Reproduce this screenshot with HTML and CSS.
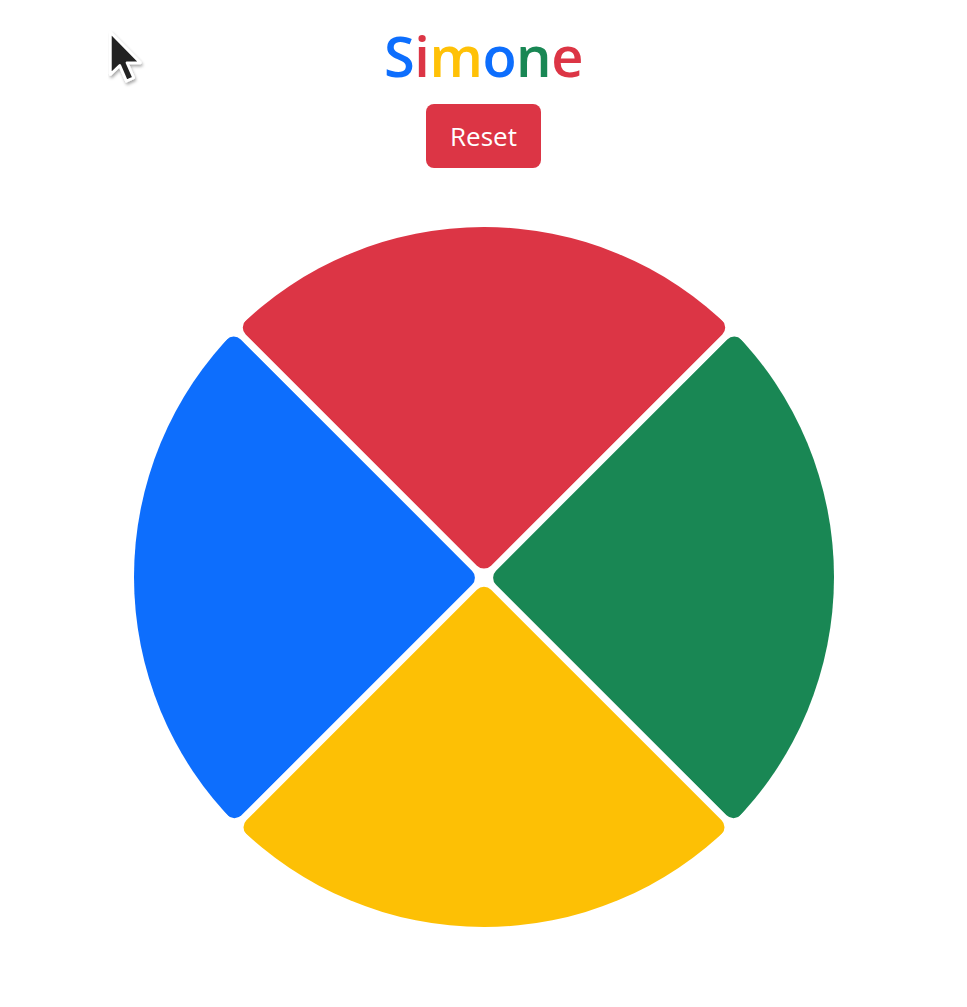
FILE: index.html
```html
<!DOCTYPE html>
<html lang="en">

<head>
    <meta charset="UTF-8">
    <meta name="viewport" content="width=device-width, initial-scale=1.0">
    <title>Simone</title>
    <link rel="stylesheet" href="styles.css">
</head>

<body>
    <div id="game">
        <h1 class="title">
            <span class="blue">S</span><span class="red">i</span><span class="yellow">m</span><span class="blue">o</span><span class="green">n</span><span class="red">e</span>
        </h1>
        <button type="button" class="reset-button">Reset</button>
        <div class="board">
            <div class="pads">
                <div class="pad pad-red"></div>
                <div class="pad pad-green"></div>
                <div class="pad pad-blue"></div>
                <div class="pad pad-yellow"></div>
            </div>
        </div>
    </div>
    <svg class="cursor" width="38" height="60" viewBox="0 0 34 54">
        <defs>
            <filter id="shadow" x="-30%" y="-30%" width="160%" height="160%">
                <feDropShadow dx="1" dy="2" stdDeviation="1.5" flood-color="#000" flood-opacity="0.35"/>
            </filter>
        </defs>
        <path d="M2 2 L2 40 L10.5 32 L16.5 46 L23 43 L17 29.5 L29 29.5 Z" fill="#222" stroke="#fff" stroke-width="2.5" stroke-linejoin="round" filter="url(#shadow)"/>
    </svg>
</body>

</html>
```

FILE: styles.css
```css
body {
    font-family: "Open Sans", "Noto Sans", sans-serif;
    margin: 0;
    background: #fff;
}

#game {
    display: flex;
    flex-direction: column;
    align-items: center;
    padding-top: 22px;
}

.title {
    margin: 0;
    font-size: 56px;
    font-weight: 600;
    line-height: 1.2;
    letter-spacing: -0.5px;
}

.blue { color: #0d6efd; }
.red { color: #dc3545; }
.yellow { color: #ffc107; }
.green { color: #198754; }

.reset-button {
    margin-top: 15px;
    font-family: inherit;
    font-size: 26px;
    color: #fff;
    background: #dc3545;
    border: none;
    border-radius: 8px;
    width: 115px;
    height: 64px;
    padding: 0;
}

.board {
    margin-top: 59px;
    width: 700px;
    height: 700px;
    border-radius: 50%;
    overflow: hidden;
}

.pads {
    width: 700px;
    height: 700px;
    display: grid;
    grid-template-columns: 1fr 1fr;
    grid-template-rows: 1fr 1fr;
    gap: 7px;
    transform: rotate(45deg);
}

.pad {
    border-radius: 10px;
}

.pad-red { background: #dc3545; }
.pad-green { background: #198754; }
.pad-blue { background: #0d6efd; }
.pad-yellow { background: #fdc005; }

.cursor {
    position: absolute;
    left: 108px;
    top: 30px;
}
```
